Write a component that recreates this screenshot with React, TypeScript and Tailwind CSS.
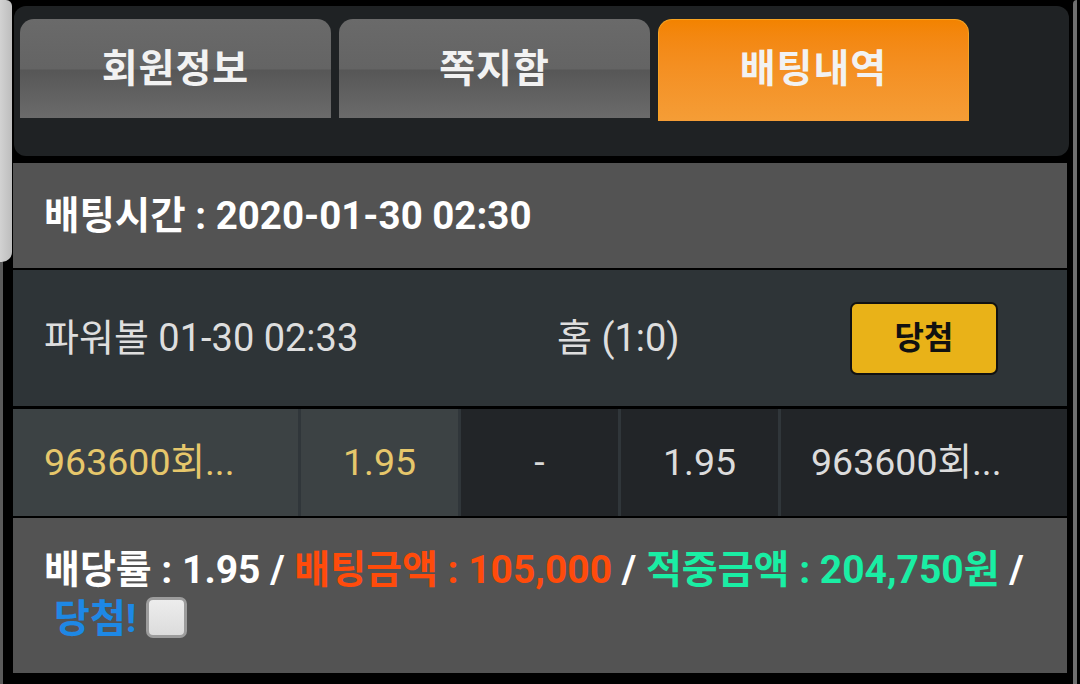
const tabs = [
  { label: '회원정보', active: false },
  { label: '쪽지함', active: false },
  { label: '배팅내역', active: true },
];

const cells = [
  { text: '963600회...', w: 'w-[285px]', bg: 'bg-[#3c4244]', color: 'text-[#e6c76b]', align: 'justify-start pl-[31px]' },
  { text: '1.95', w: 'w-[157px]', bg: 'bg-[#3c4244]', color: 'text-[#e6c76b]', align: 'justify-center' },
  { text: '-', w: 'w-[157px]', bg: 'bg-[#222528]', color: 'text-[#d8d8d8]', align: 'justify-center' },
  { text: '1.95', w: 'w-[157px]', bg: 'bg-[#222528]', color: 'text-[#dcdcdc]', align: 'justify-center' },
  { text: '963600회...', w: 'flex-1', bg: 'bg-[#222528]', color: 'text-[#dcdcdc]', align: 'justify-start pl-[30px]' },
];

const Tab = ({ label, active }: { label: string; active: boolean }) => (
  <div
    className={
      active
        ? 'w-[311px] h-[102px] rounded-t-[14px] border border-b-0 border-[#f7a323] bg-gradient-to-b from-[#f38300] to-[#f59d36] flex items-center justify-center pb-[2px]'
        : 'w-[311px] h-[99px] rounded-t-[14px] bg-[linear-gradient(to_bottom,#6a6a6a_0%,#646464_50%,#575757_52%,#6b6b6b_100%)] flex items-center justify-center pt-[2px]'
    }
  >
    <span className="text-[39px] font-bold text-[#f2f2f2] tracking-[1px]">{label}</span>
  </div>
);

export default function App() {
  return (
    <div className="w-[1080px] h-[684px] bg-black flex overflow-hidden font-[Roboto,'Noto_Sans_CJK_KR',sans-serif]">
      {/* left edge of the window behind */}
      <div className="w-[13px] flex flex-col">
        <div className="h-[262px] w-[12px] rounded-br-[10px] rounded-tr-[6px] bg-gradient-to-r from-[#d2d2d2] to-[#bdbdbd]" />
        <div className="flex-1 w-[3px] bg-[#5a5a5a]" />
      </div>

      <div className="w-[1054px] flex flex-col pt-[6px]">
        {/* tab panel */}
        <div className="h-[150px] ml-[1px] -mr-[2px] rounded-[12px] bg-[#1f2224] pt-[13px] pl-[6px] flex items-start gap-[8px]">
          {tabs.map((t) => (
            <Tab key={t.label} label={t.label} active={t.active} />
          ))}
        </div>

        <div className="h-[7px]" />

        <div className="h-[105px] bg-[#535353] flex items-center pl-[31px]">
          <span className="text-[38.5px] font-bold text-white">배팅시간 : 2020-01-30 02:30</span>
        </div>

        <div className="h-[2px]" />

        <div className="h-[136px] bg-[#2e3437] flex items-center pl-[31px]">
          <span className="w-[513px] text-[38px] text-[#dedede]">파워볼 01-30 02:33</span>
          <span className="w-[293px] text-[38px] text-[#dedede]">홈 (1:0)</span>
          <div className="w-[148px] h-[73px] rounded-[7px] border-[2px] border-[#111] bg-[#e9b218] flex items-center justify-center">
            <span className="text-[32px] font-bold text-[#111]">당첨</span>
          </div>
        </div>

        <div className="h-[3px]" />

        <div className="h-[107px] flex gap-[3px] bg-[#30363a]">
          {cells.map((c, i) => (
            <div key={i} className={`${c.w} ${c.bg} flex items-center ${c.align}`}>
              <span className={`text-[37.5px] ${c.color}`}>{c.text}</span>
            </div>
          ))}
        </div>

        <div className="h-[2px]" />

        <div className="h-[155px] bg-[#535353] pl-[31px] pt-[28px]">
          <p className="text-[39px] font-bold leading-[49px] text-white">
            배당률 : 1.95 / <span className="text-[#ff4b0b]">배팅금액 : 105,000</span> /{' '}
            <span className="text-[#1aeea4]">적중금액 : 204,750원</span> /
            <br />
            <span className="ml-[10px] text-[#1e88e5]">당첨!</span>
            <span className="inline-block align-[-6px] ml-[10px] w-[41px] h-[41px] rounded-[7px] border-[3px] border-[#9c9c9c] bg-gradient-to-b from-[#ededed] to-[#dcdcdc]" />
          </p>
        </div>
      </div>

      {/* right edge of the window behind */}
      <div className="flex-1 flex pl-[6px]">
        <div className="w-[4px] h-full rounded-tl-[14px] border-l-[4px] border-t-[2px] border-[#6f6f6f]" />
      </div>
    </div>
  );
}
